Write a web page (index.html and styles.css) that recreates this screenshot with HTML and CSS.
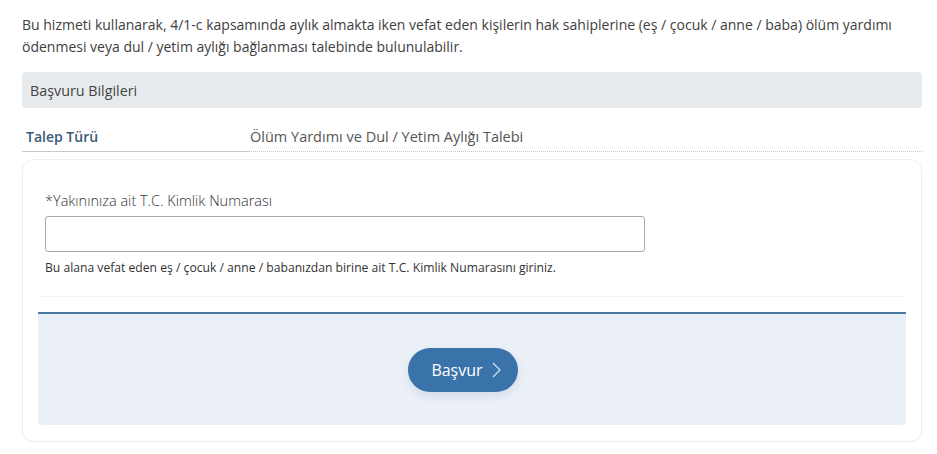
FILE: index.html
```html
<!DOCTYPE html>
<html lang="tr">
<head>
<meta charset="utf-8">
<title>Başvuru</title>
<link rel="stylesheet" href="styles.css">
</head>
<body>
<div class="page">
  <p class="intro">Bu hizmeti kullanarak, 4/1-c kapsamında aylık almakta iken vefat eden kişilerin hak sahiplerine (eş / çocuk / anne / baba) ölüm yardımı ödenmesi veya dul / yetim aylığı bağlanması talebinde bulunulabilir.</p>
  <div class="section-title">Başvuru Bilgileri</div>
  <div class="info-row">
    <div class="info-label">Talep Türü</div>
    <div class="info-value">Ölüm Yardımı ve Dul / Yetim Aylığı Talebi</div>
  </div>
  <div class="card">
    <div class="form-area">
      <label class="field-label" for="tckn">*Yakınınıza ait T.C. Kimlik Numarası</label>
      <input class="field-input" id="tckn" type="text">
      <div class="field-help">Bu alana vefat eden eş / çocuk / anne / babanızdan birine ait T.C. Kimlik Numarasını giriniz.</div>
    </div>
    <div class="actions">
      <button class="btn-primary" type="button">Başvur
        <svg class="chev" width="9" height="16" viewBox="0 0 9 16" aria-hidden="true"><polyline points="1,1 8,8 1,15" fill="none" stroke="#d6e4f2" stroke-width="1.2"/></svg>
      </button>
    </div>
  </div>
</div>
</body>
</html>
```

FILE: styles.css
```css
* { box-sizing: border-box; }
html, body { margin: 0; padding: 0; background: #fff; }
body {
  font-family: "Open Sans", "Liberation Sans", sans-serif;
  color: #444;
  font-size: 14px;
}
.page {
  padding: 14px 15px 0 22px;
}
.intro {
  margin: 0;
  font-size: 14px;
  line-height: 21.5px;
  color: #3e3e3e;
}
.section-title {
  margin-top: 15px;
  height: 36px;
  background: #e8ebed;
  border-radius: 4px;
  padding-left: 8px;
  display: flex;
  align-items: center;
  font-size: 14.3px;
  color: #444;
}
.info-row {
  margin-top: 18px;
  display: flex;
}
.info-label {
  width: 226px;
  flex: none;
  padding: 0 0 4px 4px;
  border-bottom: 1px solid #c9c9c9;
  font-weight: 600;
  color: #3a5a7a;
  line-height: 21px;
}
.info-value {
  flex: 1;
  padding: 0 0 4px 2px;
  border-bottom: 1px dotted #c6c6c6;
  color: #555;
  font-size: 14.5px;
  line-height: 21px;
}
.card {
  margin-top: 7px;
  border: 1px solid #eceef0;
  border-radius: 12px;
  padding: 16px 15px 16px 15px;
  box-shadow: 0 1px 2px rgba(0,0,0,0.03);
}
.form-area {
  padding: 16px 7px 20px 7px;
  border-bottom: 1px solid #f0f1f2;
}
.field-label {
  display: block;
  font-size: 14.5px;
  line-height: 18px;
  font-weight: 300;
  color: #333;
}
.field-input {
  display: block;
  margin-top: 6px;
  width: 600px;
  height: 36px;
  border: 1px solid #a9a9a9;
  border-radius: 3px;
  background: #fff;
  font-family: inherit;
  font-size: 14px;
  padding: 0 10px;
}
.field-help {
  margin-top: 8px;
  font-size: 12.15px;
  line-height: 16px;
  color: #333;
}
.actions {
  margin-top: 15px;
  border-top: 2px solid #4a7aa3;
  background: #ebf0f7;
  border-radius: 0 0 4px 4px;
  padding: 34px 0 33px;
  display: flex;
  justify-content: center;
}
.btn-primary {
  margin-right: 18px;
  height: 44px;
  width: 110px;
  border: none;
  border-radius: 22px;
  background: #3a73a9;
  color: #fff;
  font-family: "Open Sans", "Liberation Sans", sans-serif;
  font-size: 16px;
  display: flex;
  align-items: center;
  justify-content: center;
  gap: 9px;
  padding: 0 6px 0 12px;
  box-shadow: 0 4px 8px rgba(40, 80, 130, 0.12);
}
.chev { display: block; }
```
